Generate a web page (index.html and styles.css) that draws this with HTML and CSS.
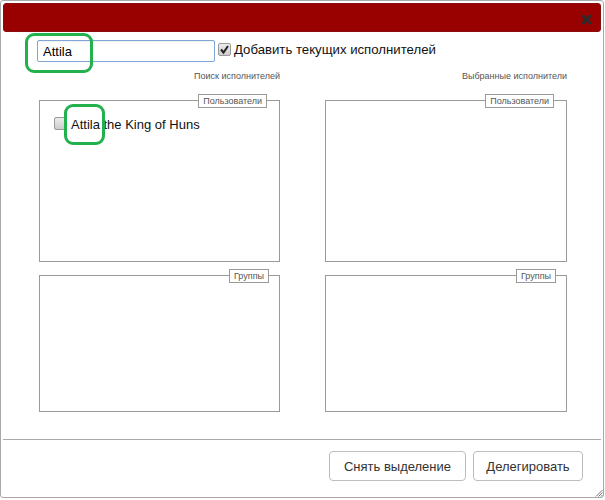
FILE: index.html
```html
<!DOCTYPE html>
<html>
<head>
<meta charset="utf-8">
<link rel="stylesheet" href="styles.css">
</head>
<body>
<div class="dialog">
  <div class="titlebar">
    <svg class="close" width="11" height="11" viewBox="0 0 11 11"><path d="M2 2 L9 9 M9 2 L2 9" stroke="#2b2b2b" stroke-width="3" stroke-linecap="round"/></svg>
  </div>
  <div class="content">
    <div class="search-row">
      <input class="search" type="text" value="Attila">
      <label class="add">
        <span class="cb checked"><svg width="11" height="11" viewBox="0 0 11 11"><path d="M2 5.5 L4.5 8.5 L9 2" fill="none" stroke="#222" stroke-width="2"/></svg></span>
        <span>Добавить текущих исполнителей</span>
      </label>
    </div>
    <div class="columns">
      <div class="col">
        <div class="col-title">Поиск исполнителей</div>
        <div class="box users">
          <span class="legend">Пользователи</span>
          <div class="item"><span class="cb"></span><span>Attila the King of Huns</span></div>
        </div>
        <div class="box groups">
          <span class="legend">Группы</span>
        </div>
      </div>
      <div class="col">
        <div class="col-title">Выбранные исполнители</div>
        <div class="box users">
          <span class="legend">Пользователи</span>
        </div>
        <div class="box groups">
          <span class="legend">Группы</span>
        </div>
      </div>
    </div>
  </div>
  <div class="footer">
    <button class="btn btn-clear">Снять выделение</button>
    <button class="btn btn-delegate">Делегировать</button>
  </div>
  <svg class="grip" width="8" height="8" viewBox="0 0 8 8"><path d="M7.5 1 L1 7.5 M7.5 3.5 L3.5 7.5 M7.5 6 L6 7.5" stroke="#777" stroke-width="1"/></svg>
  <div class="mark mark1"></div>
  <div class="mark mark2"></div>
</div>
</body>
</html>
```
FILE: styles.css
```css
html, body {
  margin: 0;
  padding: 0;
  background: #fff;
}
body {
  font-family: "Liberation Sans", Arial, sans-serif;
  color: #111;
}
.dialog {
  position: relative;
  box-sizing: border-box;
  width: 604px;
  height: 498px;
  border: 1px solid #a9a9a9;
  border-radius: 3px;
  padding: 2px;
  display: flex;
  flex-direction: column;
  background: #fff;
}
.titlebar {
  box-sizing: border-box;
  height: 29px;
  background: #990000;
  border: 1px solid #8c0d0d;
  border-radius: 3px;
  display: flex;
  align-items: center;
  justify-content: flex-end;
  padding-right: 8px;
}
.close {
  display: block;
  margin-top: 3px;
}
.content {
  flex: 1;
}
.search-row {
  display: flex;
  align-items: center;
  margin-top: 8px;
  margin-left: 34px;
  height: 22px;
}
.search {
  box-sizing: border-box;
  width: 178px;
  height: 22px;
  border: 1px solid #7fa6d6;
  border-radius: 2px;
  padding: 0 5px;
  font-family: "Liberation Sans", Arial, sans-serif;
  font-size: 13px;
  color: #000;
  outline: none;
  box-shadow: inset 0 1px 1px rgba(0,0,0,0.06);
}
.add {
  display: flex;
  align-items: center;
  margin-left: 3px;
  font-size: 13.2px;
  color: #111;
  margin-top: -3px;
}
.cb {
  box-sizing: border-box;
  display: inline-flex;
  align-items: center;
  justify-content: center;
  width: 13px;
  height: 13px;
  border: 1px solid #9a9a9a;
  border-radius: 2px;
  background: linear-gradient(#ececec, #cdcdcd);
  flex: none;
}
.add .cb {
  margin-right: 3px;
}
.cb svg {
  display: block;
}
.columns {
  display: grid;
  grid-template-columns: 241px 242px;
  column-gap: 45px;
  padding-left: 36px;
  margin-top: 8px;
}
.col-title {
  font-size: 9px;
  line-height: 12px;
  color: #555;
  text-align: right;
  margin-bottom: 18px;
}
.box {
  position: relative;
  box-sizing: border-box;
  border: 1px solid #9a9a9a;
}
.box.users {
  height: 162px;
}
.box.groups {
  height: 137px;
  margin-top: 13px;
}
.legend {
  position: absolute;
  top: -7px;
  right: 12px;
  box-sizing: border-box;
  height: 14px;
  line-height: 12px;
  padding: 0 4px;
  border: 1px solid #9a9a9a;
  background: #fff;
  font-size: 9px;
  color: #555;
}
.box.groups .legend {
  right: 10px;
}
.item {
  display: flex;
  align-items: center;
  margin: 15px 0 0 14px;
  height: 16px;
  font-size: 13px;
  color: #111;
}
.item .cb {
  margin-right: 4px;
  margin-top: -1px;
}
.footer {
  box-sizing: border-box;
  height: 56px;
  border-top: 1px solid #a9a9a9;
  display: flex;
  justify-content: flex-end;
  align-items: flex-start;
  gap: 7px;
  padding: 11px 18px 0 0;
}
.btn {
  box-sizing: border-box;
  height: 30px;
  border: 1px solid #bdbdbd;
  border-radius: 4px;
  background: #fff;
  font-family: "Liberation Sans", Arial, sans-serif;
  font-size: 13px;
  color: #333;
  padding: 0;
}
.btn-clear {
  width: 137px;
}
.btn-delegate {
  width: 110px;
}
.grip {
  position: absolute;
  right: 0;
  bottom: 0;
}
.mark {
  position: absolute;
  box-sizing: border-box;
  border: 3px solid #22b14c;
  border-radius: 9px;
}
.mark1 {
  left: 24px;
  top: 32px;
  width: 68px;
  height: 40px;
}
.mark2 {
  left: 63px;
  top: 103px;
  width: 41px;
  height: 41px;
}
```
